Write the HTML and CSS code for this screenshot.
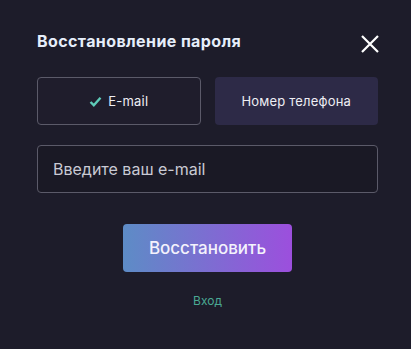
FILE: index.html
```html
<!DOCTYPE html>
<html lang="ru">
<head>
  <meta charset="UTF-8" />
  <title>Восстановление пароля</title>
  <link rel="stylesheet" href="styles.css">
</head>
<body>

  <div class="modal">
    <!-- Header -->
    <div class="modal-head">
      <h2>Восстановление пароля</h2>
      <span class="close-btn">
        <svg width="20" height="20" viewBox="0 0 20 20">
          <path d="M2 2 L18 18 M18 2 L2 18" stroke="#ffffff" stroke-width="2.2" fill="none"/>
        </svg>
      </span>
    </div>

    <!-- Tabs -->
    <div class="tabs">
      <button class="tab active">
        <svg width="13" height="11" viewBox="0 0 13 11">
          <path d="M1.5 6 L4.8 9.2 L11.5 1.8" stroke="#5ecbb8" stroke-width="2.4" fill="none"/>
        </svg>
        E-mail
      </button>
      <button class="tab">Номер телефона</button>
    </div>

    <input class="field" type="text" placeholder="Введите ваш e-mail">

    <div class="actions">
      <button class="submit">Восстановить</button>
      <a href="#" class="login-link">Вход</a>
    </div>
  </div>

</body>
</html>
```

FILE: styles.css
```css
body {
  margin: 0;
  background: #1d1c2a;
  font-family: Inter, "Noto Sans", sans-serif;
  color: #fff;
}

.modal {
  width: 341px;
  padding: 29px 0 0 37px;
}

.modal-head {
  display: flex;
  justify-content: space-between;
  align-items: center;
  height: 24px;
}

.modal-head h2 {
  margin: 0;
  font-size: 16px;
  font-weight: 700;
  letter-spacing: 0.4px;
  color: #e6eefa;
}

.close-btn {
  display: flex;
  margin-top: 6px;
  margin-right: -2px;
}

.tabs {
  display: flex;
  gap: 14px;
  margin-top: 24px;
}

.tab {
  flex: 1;
  height: 48px;
  border-radius: 4px;
  border: 1px solid transparent;
  background: #2d2a47;
  color: #eeeef4;
  font-family: inherit;
  font-size: 13px;
  letter-spacing: 0.2px;
  display: flex;
  align-items: center;
  justify-content: center;
  gap: 6px;
}

.tab.active {
  background: #1f1d2c;
  border-color: #5b5a69;
}

.field {
  display: block;
  box-sizing: border-box;
  width: 100%;
  height: 48px;
  margin-top: 20px;
  padding: 0 15px;
  border: 1px solid #5b5a69;
  border-radius: 4px;
  background: #1a1925;
  font-family: inherit;
  font-size: 16px;
  color: #fff;
}

.field::placeholder {
  color: #c9cad4;
}

.actions {
  display: flex;
  flex-direction: column;
  align-items: center;
  margin-top: 31px;
}

.submit {
  width: 169px;
  height: 48px;
  border: none;
  border-radius: 4px;
  background: linear-gradient(90deg, #5d8cc6, #9c4fdd);
  color: #f4f2fc;
  font-family: inherit;
  font-size: 17px;
  font-weight: 500;
}

.login-link {
  margin-top: 21px;
  font-size: 12px;
  color: #4aa893;
  text-decoration: none;
}
```
